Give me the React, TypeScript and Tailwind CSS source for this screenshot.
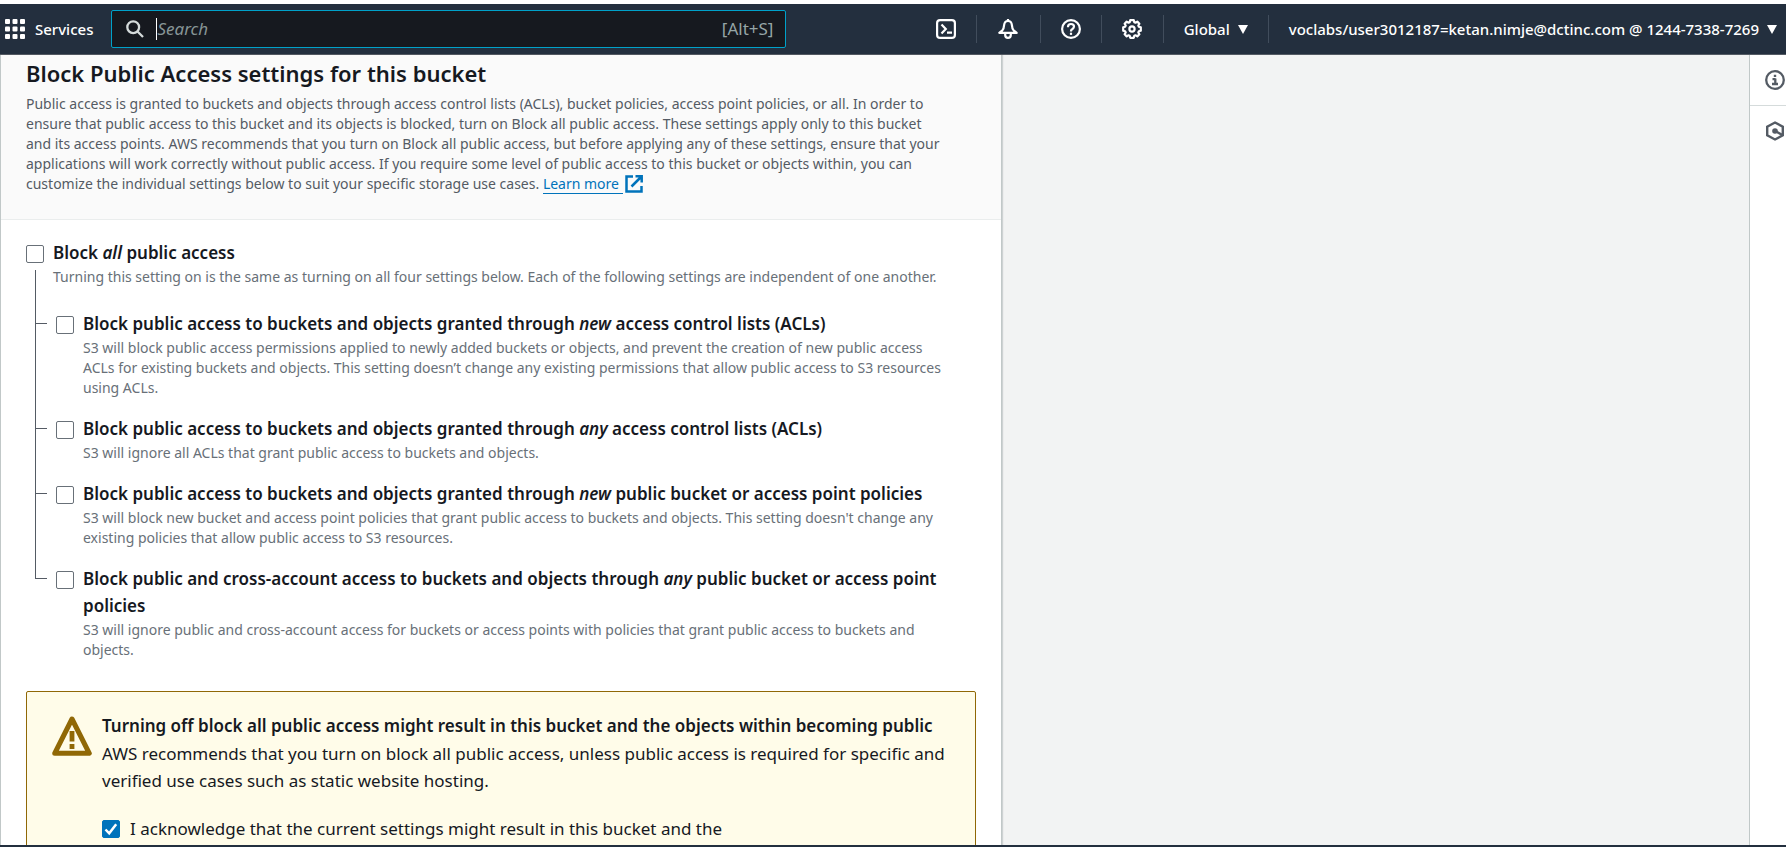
import React, { ReactNode, useState } from "react";

const navIcon = "flex items-center justify-center text-white";

function GridIcon() {
  return (
    <svg viewBox="0 0 20 20" className="size-5 shrink-0" fill="#fff" aria-hidden="true">
      {[0, 7.5, 15].map((y) =>
        [0, 7.5, 15].map((x) => <rect key={`${x}-${y}`} x={x} y={y} width="5" height="5" rx="1" />)
      )}
    </svg>
  );
}

function SearchIcon() {
  return (
    <svg viewBox="0 0 18 18" className="size-[18px] shrink-0" fill="none" stroke="#d5dbdb" strokeWidth="2.3" aria-hidden="true">
      <circle cx="7.2" cy="7.2" r="5.9" />
      <path d="M11.5 11.5 17 17" />
    </svg>
  );
}

function TerminalIcon() {
  return (
    <svg viewBox="0 0 20 20" className="size-5" fill="none" stroke="currentColor" strokeWidth="2.2" aria-hidden="true">
      <rect x="1.1" y="1.1" width="17.8" height="17.8" rx="3" />
      <path d="M5.5 5.500 9.800 10l-4.300 4.500M11 13.700h5" />
    </svg>
  );
}

function BellIcon() {
  return (
    <svg viewBox="0 0 20 20" className="size-5" fill="none" stroke="currentColor" strokeWidth="2.2" strokeLinejoin="round" aria-hidden="true">
      <path d="M10 0v2" />
      <path d="M10 2c-2.500 0-3.700 1.900-3.900 4.200-.2 2.900-.6 4-1.700 5.100L1.300 13.900h17.400l-3.100-2.600c-1.100-1.100-1.500-2.200-1.700-5.100C13.700 3.900 12.500 2 10 2Z" />
      <path d="M7.200 14v2c0 1.700 1.100 2.900 2.800 2.900s2.800-1.200 2.800-2.900v-2" />
    </svg>
  );
}

function HelpIcon() {
  return (
    <svg viewBox="0 0 20 20" className="size-5" fill="none" stroke="currentColor" strokeWidth="2.200" aria-hidden="true">
      <circle cx="10" cy="10" r="8.900" />
      <path d="M7 8.200V7.800C7 6.200 8.300 5 10 5s3 1.100 3 2.600c0 1.100-.6 1.800-1.500 2.400-1 .6-1.500 1.100-1.500 2v.5" />
      <path d="M10 13.700v2.200" />
    </svg>
  );
}

function GearIcon() {
  return (
    <svg viewBox="0 0 20 20" className="size-5" fill="none" stroke="currentColor" strokeWidth="2.200" strokeLinejoin="round" aria-hidden="true">
      <path d="M8.200 1.200h3.600l.5 2 1.200.5 1.800-1.100 2.100 2.100-1.100 1.800.5 1.200 2 .5v3.600l-2 .5-.5 1.200 1.100 1.800-2.100 2.100-1.800-1.100-1.200.5-.5 2H8.200l-.5-2-1.200-.5-1.800 1.100-2.100-2.100 1.100-1.800-.5-1.200-2-.5V8.200l2-.5.5-1.200-1.100-1.800 2.100-2.100 1.800 1.100 1.200-.5Z" />
      <circle cx="10" cy="10" r="2.600" />
    </svg>
  );
}

function Caret() {
  return (
    <svg viewBox="0 0 10 9" className="h-[9px] w-[10px] shrink-0" fill="#fff" aria-hidden="true">
      <path d="M0 0h10L5 9Z" />
    </svg>
  );
}

function InfoIcon() {
  return (
    <svg viewBox="0 0 20 20" className="size-5 shrink-0" fill="none" stroke="#545b64" strokeWidth="2.300" aria-hidden="true">
      <circle cx="10" cy="10" r="8.800" />
      <path d="M8.800 5.800h2.400M7.500 9.200H10.500M10.300 8.500v5.500M7 14h6" />
    </svg>
  );
}

function HexIcon() {
  return (
    <svg viewBox="0 0 20 20" className="size-5 shrink-0" fill="none" stroke="#545b64" strokeWidth="2.400" aria-hidden="true">
      <path d="M10 1.500 17.800 5.700v8.600L10 18.500 2.200 14.300V5.700Z" />
      <path d="m10 10 7.500 4" />
      <circle cx="10" cy="10" r="2.800" fill="#545b64" stroke="none" />
    </svg>
  );
}

function ExternalIcon() {
  return (
    <svg viewBox="0 0 18 18" className="ml-[2px] inline-block size-[18px] align-[-4px]" fill="none" stroke="#0073bb" strokeWidth="2.500" aria-hidden="true">
      <path d="M8 1.500H1.500v15h15V11M10.500 1.300h6.200v6.200M16.500 1.500 6.500 11.500" />
    </svg>
  );
}

function WarningIcon() {
  return (
    <svg viewBox="0 0 40 40" className="size-10 shrink-0" fill="none" stroke="#906806" strokeWidth="5" strokeLinejoin="round" aria-hidden="true">
      <path d="M20 3 37.300 37.300H2.700Z" />
      <path d="M20 15v10.500M20 28v5" strokeWidth="4.800" />
    </svg>
  );
}

function Divider() {
  return <span className="h-7 w-px shrink-0 bg-[#414d5c]" />;
}

function Checkbox({ id, checked, onChange }: { id: string; checked: boolean; onChange: (v: boolean) => void }) {
  return (
    <span className="grid size-[18px] shrink-0">
      <input
        id={id}
        type="checkbox"
        checked={checked}
        onChange={(e) => onChange(e.target.checked)}
        className="col-start-1 row-start-1 size-[18px] appearance-none rounded-[2px] border border-[#687078] bg-white checked:border-[#0073bb] checked:bg-[#0073bb]"
      />
      {checked && (
        <svg viewBox="0 0 18 18" className="pointer-events-none col-start-1 row-start-1 size-[18px]" fill="none" stroke="#fff" strokeWidth="2.500" aria-hidden="true">
          <path d="m3.500 9.500 3.700 3.800 7-9" />
        </svg>
      )}
    </span>
  );
}

const options: { id: string; label: ReactNode; lines: string[] }[] = [
  {
    id: "new-acls",
    label: (
      <>
        Block public access to buckets and objects granted through <i>new</i> access control lists (ACLs)
      </>
    ),
    lines: [
      "S3 will block public access permissions applied to newly added buckets or objects, and prevent the creation of new public access",
      "ACLs for existing buckets and objects. This setting doesn’t change any existing permissions that allow public access to S3 resources",
      "using ACLs.",
    ],
  },
  {
    id: "any-acls",
    label: (
      <>
        Block public access to buckets and objects granted through <i>any</i> access control lists (ACLs)
      </>
    ),
    lines: ["S3 will ignore all ACLs that grant public access to buckets and objects."],
  },
  {
    id: "new-policies",
    label: (
      <>
        Block public access to buckets and objects granted through <i>new</i> public bucket or access point policies
      </>
    ),
    lines: [
      "S3 will block new bucket and access point policies that grant public access to buckets and objects. This setting doesn't change any",
      "existing policies that allow public access to S3 resources.",
    ],
  },
  {
    id: "any-policies",
    label: (
      <>
        Block public and cross-account access to buckets and objects through <i>any</i> public bucket or access point policies
      </>
    ),
    lines: [
      "S3 will ignore public and cross-account access for buckets or access points with policies that grant public access to buckets and",
      "objects.",
    ],
  },
];

const intro = [
  "Public access is granted to buckets and objects through access control lists (ACLs), bucket policies, access point policies, or all. In order to",
  "ensure that public access to this bucket and its objects is blocked, turn on Block all public access. These settings apply only to this bucket",
  "and its access points. AWS recommends that you turn on Block all public access, but before applying any of these settings, ensure that your",
  "applications will work correctly without public access. If you require some level of public access to this bucket or objects within, you can",
];

function Header() {
  return (
    <header className="flex h-[51px] shrink-0 items-center border-b border-[#545b64] bg-[#232f3e] pl-[5px] text-[15px] font-medium text-white">
      <button className="flex items-center gap-[10px]">
        <GridIcon />
        Services
      </button>
      <label className="ml-[18px] flex h-[38px] max-w-[675px] flex-1 items-center rounded-[2px] border border-[#00a1c9] bg-[#16191f] pr-3 pl-[14px] text-[17px] font-normal">
        <SearchIcon />
        <span className="ml-3 h-[22px] w-px shrink-0 bg-white" />
        <input
          type="text"
          aria-label="Search"
          placeholder="Search"
          className="min-w-0 flex-1 bg-transparent outline-none placeholder:text-[#879596] placeholder:italic"
        />
        <span className="text-[#95a5a6]">[Alt+S]</span>
      </label>
      <nav className="ml-auto flex shrink-0 items-center">
        <button aria-label="CloudShell" className={navIcon + " w-[60px]"}>
          <TerminalIcon />
        </button>
        <Divider />
        <button aria-label="Notifications" className={navIcon + " w-[63px]"}>
          <BellIcon />
        </button>
        <Divider />
        <button aria-label="Help" className={navIcon + " w-[60px]"}>
          <HelpIcon />
        </button>
        <Divider />
        <button aria-label="Settings" className={navIcon + " w-[61px]"}>
          <GearIcon />
        </button>
        <Divider />
        <button className="flex items-center gap-2 px-5">
          Global
          <Caret />
        </button>
        <Divider />
        <button className="flex items-center gap-2 pr-[9px] pl-5">
          voclabs/user3012187=ketan.nimje@dctinc.com @ 1244-7338-7269
          <Caret />
        </button>
      </nav>
    </header>
  );
}

export default function App() {
  const [checked, setChecked] = useState<Record<string, boolean>>({ ack: true });
  const set = (id: string) => (v: boolean) => setChecked((c) => ({ ...c, [id]: v }));
  const box = (id: string) => <Checkbox id={id} checked={!!checked[id]} onChange={set(id)} />;

  return (
    <div className="flex h-screen flex-col overflow-hidden border-t-4 border-b-2 border-t-white border-b-[#232f3e] bg-[#f2f3f3] font-['Noto_Sans',sans-serif] text-[#16191f]">
      <Header />
      <div className="flex min-h-0 flex-1 justify-between">
        <main className="w-full max-w-[1002px] overflow-hidden border-x border-[#c1c8c8] bg-white shadow-[1px_0_1px_rgba(0,28,36,0.15)]">
          <div className="border-b border-[#eaeded] bg-[#fafafa] px-[25px] pt-[3px] pb-[25px]">
            <h2 className="text-[22px] leading-[30px] font-semibold">Block Public Access settings for this bucket</h2>
            <p className="pt-[6px] text-sm leading-5 text-[#545b64]">
              {intro.map((line) => (
                <React.Fragment key={line}>
                  {line}
                  <br />
                </React.Fragment>
              ))}
              customize the individual settings below to suit your specific storage use cases.{" "}
              <a href="#learn-more" className="text-[#0073bb]">
                <span className="border-b border-[#0073bb] pr-1">Learn more</span>
                <ExternalIcon />
              </a>
            </p>
          </div>

          <div className="px-[25px] pt-[19px]">
            <div className="flex gap-[9px]">
              <div className="flex flex-col pt-[6px]">
                {box("all")}
                <span className="mt-[7px] ml-[9px] flex-1 border-l border-[#545b64]" />
              </div>
              <div className="pb-[23px]">
                <label htmlFor="all" className="block text-[17px] leading-[27px] font-semibold">
                  Block <i>all</i> public access
                </label>
                <p className="pt-px text-sm leading-5 text-[#687078]">
                  Turning this setting on is the same as turning on all four settings below. Each of the following settings are independent of one
                  another.
                </p>
              </div>
            </div>

            {options.map((o, i) => (
              <div key={o.id} className="flex">
                <div className="ml-[9px] flex w-3 shrink-0 flex-col">
                  <span className="h-[14px] border-b border-l border-[#545b64]" />
                  {i < options.length - 1 && <span className="flex-1 border-l border-[#545b64]" />}
                </div>
                <div className="flex gap-[9px] pb-[17px] pl-[9px]">
                  <div className="pt-[6px]">{box(o.id)}</div>
                  <div>
                    <label htmlFor={o.id} className="block text-[17px] leading-[27px] font-semibold">
                      {o.label}
                    </label>
                    <p className="pt-px text-sm leading-5 text-[#687078]">
                      {o.lines.map((line, n) => (
                        <React.Fragment key={line}>
                          {n > 0 && <br />}
                          {line}
                        </React.Fragment>
                      ))}
                    </p>
                  </div>
                </div>
              </div>
            ))}

            <section className="mt-[14px] flex gap-[10px] rounded-[2px] border border-[#906806] bg-[#fffce9] px-[25px] pt-5 pb-6 text-[17px] leading-[27px]">
              <div className="pt-1">
                <WarningIcon />
              </div>
              <div>
                <h3 className="font-semibold">Turning off block all public access might result in this bucket and the objects within becoming public</h3>
                <p className="pt-px">
                  AWS recommends that you turn on block all public access, unless public access is required for specific and verified use cases
                  such as static website hosting.
                </p>
                <div className="flex gap-[10px] pt-[21px]">
                  <div className="pt-[5px]">{box("ack")}</div>
                  <label htmlFor="ack">I acknowledge that the current settings might result in this bucket and the</label>
                </div>
              </div>
            </section>
          </div>
        </main>

        <aside className="flex w-[37px] shrink-0 flex-col overflow-hidden border-l border-[#c1c8c8] bg-white">
          <button aria-label="Info" className="flex h-[51px] shrink-0 items-center border-b border-[#d5dbdb] pl-[15px]">
            <InfoIcon />
          </button>
          <button aria-label="Diagnostics" className="flex h-[50px] shrink-0 items-center pl-[15px]">
            <HexIcon />
          </button>
        </aside>
      </div>
    </div>
  );
}
